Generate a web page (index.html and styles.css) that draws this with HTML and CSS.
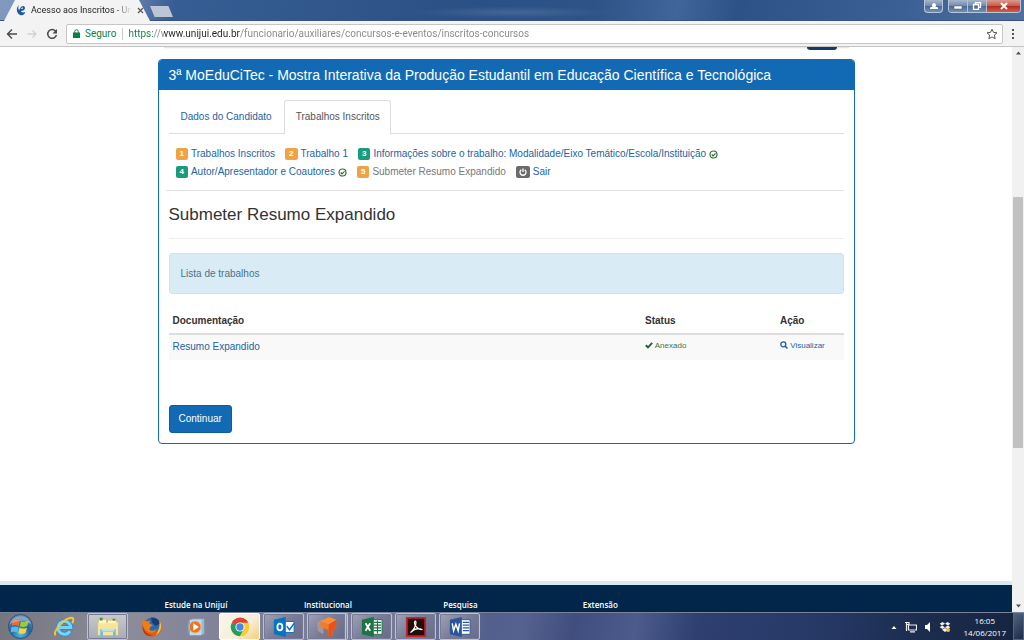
FILE: index.html
```html
<!DOCTYPE html>
<html lang="pt-BR">
<head>
<meta charset="utf-8">
<title>Acesso aos Inscritos - Unijuí</title>
<link rel="stylesheet" href="styles.css">
</head>
<body>
<header class="titlebar">
  <div class="tab-shape">
    <div class="browser-tab">
      <svg class="favicon" viewBox="0 0 10 12" aria-hidden="true"><path fill="#1c5c9c" d="M3 1C0 3 0 9 4 11c3 1 5-1 5-3-2 1-4 0-4-1 2 0 4-1 4-3C9 2 7 1 5 3 4 4 4 5 3 6 2 5 2 3 3 1z"/><path fill="#dceaf5" d="M5 5c0-1 2-2 2-1S6 5 5 5z"/></svg>
      <span class="tab-title">Acesso aos Inscritos - Un</span>
      <button class="plain tab-close" aria-label="Fechar guia"><svg viewBox="0 0 7 7"><path d="M1 1l5 5M6 1L1 6" stroke="#555" stroke-width="1.2"/></svg></button>
    </div>
  </div>
  <button class="new-tab" aria-label="Nova guia"></button>
  <div class="window-controls">
    <button class="wc user" aria-label="Perfil"><svg viewBox="0 0 10 8"><path fill="#fff" d="M1 7V5.500l2.500-1A2 2 0 1 1 6.500 4.500L9 5.500V7z"/></svg></button>
    <div class="wc-group">
      <button class="wc" aria-label="Minimizar"><svg viewBox="0 0 10 8"><path fill="#fff" stroke="#44546b" stroke-width=".5" d="M1 4h8v3H1z"/></svg></button>
      <button class="wc" aria-label="Restaurar"><svg viewBox="0 0 10 8"><path fill="none" stroke="#fff" stroke-width="1.300" d="M3.500 2V.7h5v4.600H7M1.500 2.500h5v4.800h-5z"/></svg></button>
      <button class="wc close" aria-label="Fechar"><svg viewBox="0 0 10 8"><path stroke="#fff" stroke-width="2" d="M2 1l6 6M8 1L2 7"/></svg></button>
    </div>
  </div>
</header>

<nav class="toolbar" aria-label="Navegação">
  <button class="plain nav-btn" aria-label="Voltar"><svg viewBox="0 0 12 12"><path d="M11 6H2M6 1.500L1.500 6 6 10.500" fill="none" stroke="#4a4a4a" stroke-width="1.400"/></svg></button>
  <button class="plain nav-btn" aria-label="Avançar"><svg viewBox="0 0 12 12"><path d="M1.500 6H10M6.500 2.500L10 6 6.500 9.500" fill="none" stroke="#d2d2d2" stroke-width="1.300"/></svg></button>
  <button class="plain nav-btn" aria-label="Recarregar"><svg viewBox="0 0 12 12"><path d="M9.800 3.500A4.400 4.400 0 1 0 10.400 7" fill="none" stroke="#4a4a4a" stroke-width="1.500"/><path d="M11 1v4.500H6.500z" fill="#4a4a4a"/></svg></button>
  <div class="omnibox">
    <svg class="lock" viewBox="0 0 7 9" aria-hidden="true"><path d="M0 3.500h7V9H0z" fill="#0b8043"/><path d="M1.800 4V2.400a1.700 1.700 0 0 1 3.400 0V4" fill="none" stroke="#0b8043"/></svg>
    <label class="secure" for="url">Seguro</label>
    <input id="url" class="url" type="text" value="https://www.unijui.edu.br/funcionario/auxiliares/concursos-e-eventos/inscritos-concursos">
    <button class="plain star" aria-label="Favoritos"><svg viewBox="0 0 12 12"><path d="M6 1.200l1.500 3.200 3.500.4-2.600 2.400.7 3.500L6 9l-3.100 1.700.7-3.500L1 4.800l3.500-.4z" fill="none" stroke="#555"/></svg></button>
  </div>
  <button class="plain menu" aria-label="Menu"><svg viewBox="0 0 4 12"><path fill="#555" d="M1 1h2v2H1zM1 5h2v2H1zM1 9h2v2H1z"/></svg></button>
</nav>

<div class="viewport">
  <div class="page">
    <main class="container">
      <div class="previous-card"><div class="previous-button"></div></div>
      <section class="panel">
        <h1 class="panel-title">3ª MoEduCiTec - Mostra Interativa da Produção Estudantil em Educação Científica e Tecnológica</h1>
        <div class="panel-body">
          <nav class="tabs">
            <a class="tab" href="#dados">Dados do Candidato</a>
            <a class="tab active" href="#trabalhos">Trabalhos Inscritos</a>
          </nav>
          <nav class="steps">
            <a class="step" href="#p1"><span class="num orange">1</span>Trabalhos Inscritos</a>
            <a class="step" href="#p2"><span class="num orange">2</span>Trabalho 1</a>
            <a class="step" href="#p3"><span class="num green">3</span>Informações sobre o trabalho: Modalidade/Eixo Temático/Escola/Instituição <svg class="ok" viewBox="0 0 10 10"><circle cx="5" cy="5" r="3.900" fill="none" stroke="#2f6b35" stroke-width="1.300"/><path d="M3 5l1.500 1.500L7.200 3.700" fill="none" stroke="#2f6b35" stroke-width="1.300"/></svg></a>
            <a class="step" href="#p4"><span class="num green">4</span>Autor/Apresentador e Coautores <svg class="ok" viewBox="0 0 10 10"><circle cx="5" cy="5" r="3.900" fill="none" stroke="#2f6b35" stroke-width="1.300"/><path d="M3 5l1.500 1.500L7.200 3.700" fill="none" stroke="#2f6b35" stroke-width="1.300"/></svg></a>
            <a class="step current" href="#p5"><span class="num orange">5</span>Submeter Resumo Expandido</a>
            <a class="step" href="#sair"><span class="num gray"><svg viewBox="0 0 8 8"><path d="M2.300 1.800a3 3 0 1 0 3.400 0M4 .5v3.500" fill="none" stroke="#fff" stroke-width="1.300"/></svg></span>Sair</a>
          </nav>
          <h2 class="heading">Submeter Resumo Expandido</h2>
          <div class="alert">Lista de trabalhos</div>
          <table class="docs">
            <thead><tr><th class="col-doc">Documentação</th><th class="col-status">Status</th><th class="col-action">Ação</th></tr></thead>
            <tbody><tr>
              <td><a href="#resumo">Resumo Expandido</a></td>
              <td class="small attached"><svg class="mini" viewBox="0 0 8 8"><path d="M.8 4.200L3 6.300 7.200 1.900" fill="none" stroke="#2d5f36" stroke-width="1.900"/></svg> Anexado</td>
              <td class="small"><a href="#ver"><svg class="mini" viewBox="0 0 8 8"><circle cx="3.300" cy="3.300" r="2.500" fill="none" stroke="#1f5fa0" stroke-width="1.300"/><path d="M5.200 5.200L7.500 7.500" stroke="#1f5fa0" stroke-width="1.500"/></svg> Visualizar</a></td>
            </tr></tbody>
          </table>
          <button class="continue">Continuar</button>
        </div>
      </section>
    </main>
    <footer class="site-footer">
      <div class="container footer-cols">
        <span>Estude na Unijuí</span><span>Institucional</span><span>Pesquisa</span><span>Extensão</span>
      </div>
    </footer>
  </div>
  <div class="scrollbar" aria-hidden="true">
    <svg class="arrow" viewBox="0 0 12 12"><path fill="#505050" d="M4 7.500L6.500 4.500 9 7.500z"/></svg>
    <div class="track"><div class="thumb"></div></div>
    <svg class="arrow" viewBox="0 0 12 12"><path fill="#505050" d="M4 4.500L6.500 7.500 9 4.500z"/></svg>
  </div>
</div>

<footer class="taskbar">
  <button class="start" aria-label="Iniciar"><svg viewBox="0 0 28 28">
    <defs><radialGradient id="orb" cx=".5" cy=".8" r=".8"><stop offset="0" stop-color="#4fc3ee"/><stop offset=".5" stop-color="#1f64a0"/><stop offset="1" stop-color="#6f8fae"/></radialGradient></defs>
    <circle cx="14" cy="14" r="12.500" fill="url(#orb)" stroke="#35506f"/>
    <path fill="#ef6a32" d="M6 8.500c2.500-1.700 5-1.700 7.500-.5l-1.300 5.500c-2.500-1.200-5-1.200-7.500 0z"/><path fill="#9acb3c" d="M14.500 8.500c2.500 1.200 5 1.200 8-.5l-1.500 5.500c-2.500 1.300-5 1.300-8 .2z"/><path fill="#55b9ee" d="M4.500 14.800c2.500-1.200 5-1.200 7.500 0l-1.300 5.500c-2.400-1.200-4.800-1.200-7 0z"/><path fill="#fbd13d" d="M13 15.200c2.500 1.200 5 1.200 7.700 0l-1.500 5.500c-2.500 1.200-5 1.200-7.500 0z"/>
    <path fill="#fff" opacity=".3" d="M2.500 12a12 12 0 0 1 23 0C18 7 10 7 2.500 12z"/></svg></button>
  <button class="app" aria-label="Internet Explorer"><svg viewBox="0 0 24 24"><path d="M18.500 16.500A7 7 0 1 1 19.500 12.500H6" fill="none" stroke="#1b8fd6" stroke-width="5"/><path d="M18.500 16.500A7 7 0 1 1 19.500 12.500H6" fill="none" stroke="#78d3fa" stroke-width="3.200"/><path d="M3 21C-1 17 14 1 21 2c2 .5 1 4 0 6" fill="none" stroke="#f4c631" stroke-width="2.200"/></svg></button>
  <button class="app open bright" aria-label="Explorador"><svg viewBox="0 0 24 24"><path fill="#d9b757" d="M1 4l5-2 3 2h12l2 3v14H1z"/><path fill="#f7e59a" d="M1 7h22v14H1z"/><path fill="#fff6c6" d="M2 4h8v4H2zM12 5h9v3h-9z"/><path fill="#3c9445" d="M3 2h3v3H3zM17 3h3v2h-3z"/><path d="M5 23v-7h14v7" fill="none" stroke="#74b9df" stroke-width="3"/><path fill="#b7e1f5" d="M5 14h14v3H5z"/></svg></button>
  <button class="app" aria-label="Firefox"><svg viewBox="0 0 24 24"><circle cx="12" cy="12" r="10.500" fill="#e55b13"/><circle cx="12.500" cy="9.500" r="8" fill="#236cb1"/><path fill="#143e79" d="M11 2c5-1 9 2 10 6l-5 3-4-4z"/><path fill="#ef7d17" d="M2 4l4 2 4-1-1 3 4 2-3 2-1 3c3 2 6 1 8-1-1 5-8 6-12 1C1 11 1 8 2 4z"/><path fill="#fbc329" d="M20 5c4 6 2 13-4 16 3-4 5-9 4-16z"/><path fill="#b93515" d="M2 9c0 7 5 12 11 12-5 3-13-2-11-12z"/></svg></button>
  <button class="app" aria-label="Media Player"><svg viewBox="0 0 24 24"><path fill="#8dbedd" d="M8 3h13v17H8z"/><path fill="#bcdcf0" d="M5 4h13v17H5z"/><path fill="#71a8d0" d="M3 6h2v13H3z"/><circle cx="11" cy="12" r="6.500" fill="#ec7420" stroke="#f7b274"/><path fill="#fff" d="M9 8l6 4-6 4z"/></svg></button>
  <button class="app open active" aria-label="Chrome"><svg viewBox="0 0 24 24"><circle cx="12" cy="12" r="10" fill="#f9cd35"/><path fill="#dd4637" d="M12 12L3.300 7a10 10 0 0 1 17.400 0z"/><path fill="#24a159" d="M3.300 7A10 10 0 0 0 12 22l4.300-7.500L12 12z"/><path fill="#f9cd35" d="M12 22a10 10 0 0 0 8.700-15H12l4.300 7.500z"/><path fill="#dd4637" d="M3.500 6.800a10 10 0 0 1 17.300.2H12a5 5 0 0 0-4.500 3z"/><circle cx="12" cy="12" r="5" fill="#fff"/><circle cx="12" cy="12" r="4" fill="#4689ed"/></svg></button>
  <button class="app open" aria-label="Outlook"><svg viewBox="0 0 24 24"><path fill="#f5faff" stroke="#0b6cbe" d="M12 6h11v12H12z"/><path d="M15 11l3 4 5-7" fill="none" stroke="#0b6cbe" stroke-width="1.500"/><path fill="#0873c4" d="M1 4l13-3v22L1 20z"/><ellipse cx="7.500" cy="12" rx="2.700" ry="3.700" fill="none" stroke="#fff" stroke-width="2"/></svg></button>
  <button class="app open stacked" aria-label="Projetos"><svg viewBox="0 0 24 24"><path fill="#ad9498" d="M1 7l7-4v17l-6-4z"/><path fill="#f47a27" d="M5 6l9-5 8 3v9l-4 3v5l-5 2v-8l-8-3z"/><path fill="#e9531a" d="M14 9l8-5v9l-4 3v5l-5 2z"/><path fill="#ff8c3b" d="M5 6l9-5 8 3-8 5z"/></svg></button>
  <button class="app open" aria-label="Excel"><svg viewBox="0 0 24 24"><path fill="#fff" stroke="#1e7345" d="M12 4h11v16H12z"/><path d="M14 7h8M14 10h8M14 13h8M14 16h8M18 5v14" stroke="#1e7345" stroke-width="1.300"/><path fill="#1e7345" d="M1 4l13-3v22L1 20z"/><path d="M5 8l5 8M10 8l-5 8" stroke="#fff" stroke-width="2"/></svg></button>
  <button class="app open" aria-label="Acrobat"><svg viewBox="0 0 24 24"><path fill="#260b0b" stroke="#c3242c" stroke-width="2" d="M2 2h20v20H2z"/><path d="M6 18c3-2 6-7 6-11 0-3-3-1-1 3 2 3 4 5 8 5-4-2-9-1-13 3z" fill="none" stroke="#fff" stroke-width="1.300"/></svg></button>
  <button class="app open" aria-label="Word"><svg viewBox="0 0 24 24"><path fill="#fff" stroke="#2a5699" d="M12 4h11v16H12z"/><path d="M15 7h7M15 10h7M15 13h7M15 16h7" stroke="#2a5699" stroke-width="1.300"/><path fill="#2a5699" d="M1 4l13-3v22L1 20z"/><path d="M3.500 8L5 16l2.500-7L10 16l1.500-8" fill="none" stroke="#fff" stroke-width="1.600"/></svg></button>
  <div class="tray">
    <svg class="tray-icon" viewBox="0 0 12 12"><path fill="#fff" d="M3.500 8L6 5l2.500 3z"/></svg>
    <svg class="tray-icon" viewBox="0 0 12 12"><path d="M3.500 4h8v5h-8zM5 10.800h5M1.500 1v9M0 1.500h4v2H1" fill="none" stroke="#eee" stroke-width="1.200"/></svg>
    <svg class="tray-icon" viewBox="0 0 12 12"><path fill="#fff" d="M3 4h2l3-3v10L5 8H3z"/></svg>
    <svg class="tray-icon" viewBox="0 0 12 12"><path fill="#f2f2f2" d="M3.500 1L6 2.700 3 4.500.7 2.800zM8.500 1L6 2.700l3 1.800 2.300-1.700zM3 4.500L.7 6.300 3.500 8 6 6.200zM9 4.500l2.300 1.800L8.500 8 6 6.200zM3 8.700l3-1.800 3 1.800L6 11z"/><circle cx="9" cy="9" r="2" fill="#e6c94c"/></svg>
    <div class="clock"><span>16:05</span><span>14/06/2017</span></div>
  </div>
  <button class="show-desktop" aria-label="Mostrar área de trabalho"></button>
</footer>
</body>
</html>
```
FILE: styles.css
```css
* { box-sizing: border-box; }
body { margin: 0; height: 100vh; display: flex; flex-direction: column; overflow: hidden; background: #fff; font: 10px/14px "Liberation Sans", Arial, sans-serif; color: #333; }
button { font: inherit; padding: 0; border: 0; cursor: pointer; }
svg { display: block; }
a { color: #2563a3; text-decoration: none; }
.plain { background: none; }

.titlebar { flex: none; height: 21px; display: flex; align-items: flex-start; padding: 0 3px 0 4px; background: radial-gradient(ellipse 10% 30% at 50% 62%, #6685af66, transparent), linear-gradient(100deg, #8199bf 0, #6e89b4 12%, #375e94 17%, #2b5086 45%, #2d5387 58%, #3f659b 66%, #2d5288 72%, #3b6095 88%, #506f9f 100%); border-bottom: 1px solid #35557f; }
.tab-shape { width: 146px; height: 21px; background: #f3f3f3; clip-path: polygon(11px 0, 135px 0, 100% 100%, 0 100%); }
.browser-tab { height: 20px; display: flex; align-items: center; gap: 5px; padding: 0 12px; font: 9px/12px Roboto, sans-serif; color: #222; }
.favicon { width: 10px; height: 12px; flex: none; }
.tab-title { flex: 1; white-space: nowrap; mask-image: linear-gradient(90deg, #000 82%, transparent); }
.tab-close svg { width: 7px; height: 7px; }
.new-tab { width: 23px; height: 11px; margin-top: 6px; background: #bcc6d6; clip-path: polygon(0 0, 80% 0, 100% 100%, 20% 100%); }
.window-controls { margin-left: auto; display: flex; gap: 5px; }
.wc-group { display: flex; border-radius: 0 0 4px 4px; overflow: hidden; border: 1px solid #b8c6da; border-top: 0; }
.wc { width: 19px; height: 12px; display: grid; place-items: center; background: linear-gradient(#a5b6ce, #6f88ac 50%, #4b6890 51%, #7390b5); border-right: 1px solid #b3c1d5; }
.wc svg { width: 10px; height: 8px; }
.wc.user { height: 13px; border: 1px solid #b8c6da; border-top: 0; border-radius: 0 0 4px 4px; }
.wc.close { width: 33px; border: 0; background: linear-gradient(#dc9a90, #c9594a 50%, #b02c1b 51%, #d0604a); }

.toolbar { flex: none; height: 26px; display: flex; align-items: center; gap: 8px; padding: 0 9px 0 6px; background: #f3f3f3; border-bottom: 1px solid #c4c4c4; }
.nav-btn svg { width: 12px; height: 12px; }
.omnibox { flex: 1; height: 20px; display: flex; align-items: center; padding: 0 4px 0 6px; background: #fff; border: 1px solid #c6c6c6; border-radius: 2px; font: 10px/14px Roboto, sans-serif; }
.lock { width: 7px; height: 9px; }
.secure { margin-left: 5px; padding-right: 6px; border-right: 1px solid #ccc; line-height: 12px; color: #0b8043; }
.url { flex: 1; min-width: 0; padding: 0; margin-left: 5px; border: 0; outline: 0; font: inherit; color: transparent; background: linear-gradient(90deg, #0b8043 25px, #888 25px 36px, #222 36px 112px, #858585 112px); background-clip: text; }
.star svg { width: 12px; height: 12px; }
.menu svg { width: 4px; height: 12px; }

.viewport { flex: 1; min-height: 0; display: flex; }
.page { flex: 1; min-width: 0; display: flex; flex-direction: column; }
.container { width: 100%; max-width: 697px; margin: 0 auto; }
.previous-card { height: 12px; display: flex; align-items: flex-start; justify-content: flex-end; padding-right: 18px; background: linear-gradient(#dcdcdc, #fff) 6px 0 / 685px 2px no-repeat; }
.previous-button { width: 30px; height: 3px; background: #17386b; border-radius: 0 0 3px 3px; }

.panel { border: 1px solid #126ab4; border-radius: 4px; overflow: hidden; }
.panel-title { margin: 0; padding: 6px 10px; background: #126ab4; color: #fff; font-size: 14px; line-height: 18px; font-weight: 400; }
.panel-body { padding: 10px; }
.tabs { display: flex; border-bottom: 1px solid #ddd; }
.tab { padding: 9px 11px; border: 1px solid transparent; border-bottom: 0; line-height: 14px; }
.tab.active { margin-bottom: -1px; padding-right: 10px; padding-bottom: 10px; background: #fff; color: #555; border-color: #ddd; border-radius: 3px 3px 0 0; }
.steps { display: flex; flex-wrap: wrap; column-gap: 10px; margin-left: -3px; padding: 11px 0 9px 10px; border-bottom: 1px solid #e2e2e2; line-height: 18px; }
.step { display: flex; align-items: center; gap: 3px; white-space: nowrap; }
.step.current { color: #777; }
.num { min-width: 12px; height: 12px; padding: 0 4px; border-radius: 2px; color: #fff; font-size: 8px; line-height: 12px; font-weight: 700; }
.orange { background: #f0a346; }
.green { background: #1a9c7b; }
.gray { background: #6b6b6b; padding: 2px 3px; }
.gray svg { width: 8px; height: 8px; }
.ok { width: 9px; height: 9px; }
.heading { margin: 13px 0 0; padding-bottom: 12px; border-bottom: 1px solid #eee; font-size: 17px; line-height: 22px; font-weight: 400; color: #333; }
.alert { margin-top: 14px; padding: 12px 11px; line-height: 15px; border: 1px solid #cbe5ee; border-radius: 3px; background: #d9ebf5; color: #4a7389; }
.docs { width: 100%; margin-top: 15px; border-collapse: collapse; table-layout: fixed; }
.docs th { padding: 5px 4px; text-align: left; border-bottom: 2px solid #ddd; line-height: 14px; }
.docs td { height: 26px; padding: 5px 4px; vertical-align: top; background: #f9f9f9; line-height: 14px; }
.col-doc { width: 70%; }
.col-status { width: 20%; }
.col-action { width: 10%; }
.docs .small { font-size: 8px; line-height: 12px; white-space: nowrap; }
.attached { color: #3f7546; }
.mini { display: inline-block; width: 8px; height: 8px; vertical-align: -1px; }
.continue { display: block; margin-top: 45px; padding: 7px 9px; border: 1px solid #0f5c9d; border-radius: 3px; background: #126ab4; color: #fff; line-height: 12px; }

.site-footer { margin-top: auto; height: 31px; border-top: 4px solid #d8e8f4; background: #02264a; color: #fff; font: 600 8px/12px "Open Sans", sans-serif; }
.footer-cols { display: grid; grid-template-columns: repeat(5, 1fr); padding-top: 14px; }
.footer-cols span { padding-left: 7px; }

.scrollbar { width: 12px; display: flex; flex-direction: column; background: #f1f1f1; }
.arrow { width: 12px; height: 12px; }
.track { flex: 1; display: flex; flex-direction: column; padding: 0 1px; }
.track::before { content: ""; flex: 138; }
.track::after { content: ""; flex: 152; }
.thumb { flex: 251; background: #c1c1c1; }

.taskbar { flex: none; height: 28px; display: flex; align-items: center; gap: 3px; border-top: 1px solid #77849c; background: linear-gradient(100deg, #75757f 0, #8c8c99 12%, #7d7f98 25%, #777c9a 38%, #535f8c 48%, #55628f 51%, #404e7f 56%, #4c5b8b 62%, #2e3f70 68%, #263966 80%, #1c2c4e 90%, #15243f 100%); }
.start { width: 40px; display: grid; place-items: center; background: none; }
.start svg { width: 27px; height: 27px; }
.app { width: 41px; height: 27px; display: grid; place-items: center; background: none; border: 1px solid transparent; border-radius: 2px; }
.app svg { width: 22px; height: 22px; }
.open { border-color: #c0c1cf; background: linear-gradient(135deg, #a0a2b6, #787c97 50%, #686c89); box-shadow: inset 0 0 0 1px #777a93; }
.bright { background: linear-gradient(#c9c9cd, #aaaab4); }
.app.active { background: linear-gradient(135deg, #faf7ee, #f6eddb 60%, #f5cf78); border-color: #fff; box-shadow: none; }
.stacked { border-right: 3px double #c0c1cf; }
.tray { margin-left: auto; display: flex; align-items: center; gap: 5px; color: #fff; }
.tray-icon { width: 12px; height: 12px; }
.clock { display: flex; flex-direction: column; align-items: center; margin: 0 4px 0 8px; font: 8px/12px "Open Sans", sans-serif; }
.show-desktop { width: 11px; height: 27px; border: 1px solid #55647e; background: linear-gradient(135deg, #53647f, #1c2b46); }
```
